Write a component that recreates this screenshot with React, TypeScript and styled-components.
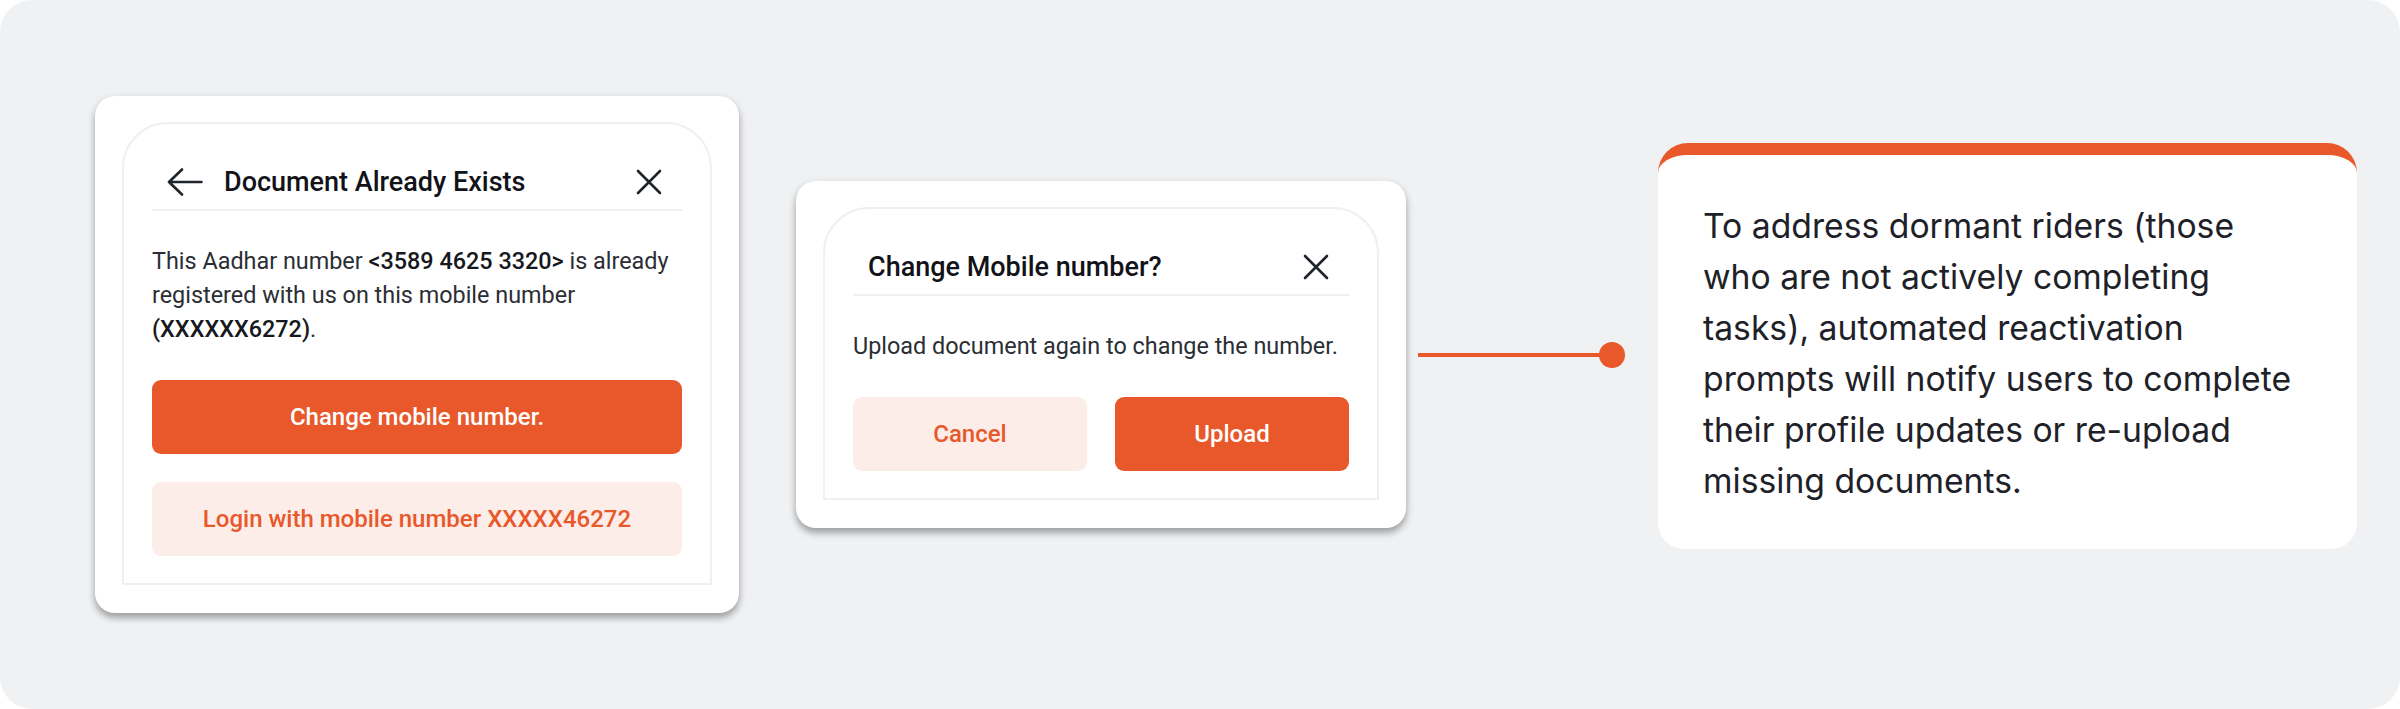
import React from "react";
import styled, { createGlobalStyle } from "styled-components";

const GlobalStyle = createGlobalStyle`
  html, body { margin: 0; padding: 0; background: #ffffff; }
  * { box-sizing: border-box; }
`;

const ORANGE = "#e8582a";
const PINK = "#fdede9";
const INK = "#1d2027";

const Canvas = styled.div`
  width: 2400px;
  height: 709px;
  background: #f0f1f3;
  border-radius: 32px;
  display: flex;
  align-items: center;
  padding-left: 95px;
  font-family: Roboto, "Liberation Sans", sans-serif;
  color: ${INK};
`;

const Card = styled.div<{ $width: number; $gapAfter: number }>`
  width: ${(p) => p.$width}px;
  margin-right: ${(p) => p.$gapAfter}px;
  background: #ffffff;
  border-radius: 20px;
  padding: 26px 27px 28px;
  box-shadow: 0 5px 7px rgba(0, 0, 0, 0.3), 0 2px 10px rgba(0, 0, 0, 0.08);
  flex-shrink: 0;
`;

const Frame = styled.div`
  border: 2px solid #eff0f2;
  border-radius: 46px 46px 0 0;
  padding: 0 28px 27px;
`;

const Header = styled.div`
  display: flex;
  align-items: center;
  height: 87px;
  padding: 40px 15px 9px;
  border-bottom: 2px solid #eef0f2;
`;

const IconButton = styled.span`
  display: inline-flex;
  align-items: center;
  justify-content: center;
  width: 36px;
  height: 36px;
  flex-shrink: 0;
  color: #1f232a;
`;

const Title = styled.h2<{ $indent: number }>`
  margin: 0 0 0 ${(p) => p.$indent}px;
  flex: 1;
  font-size: 27px;
  font-weight: 500;
  line-height: 36px;
  color: #111318;
  white-space: nowrap;
`;

const Body = styled.p`
  margin: 33px 0 0;
  font-size: 23.4px;
  line-height: 34px;
  color: #2b2e34;
`;

const Strong = styled.span`
  font-weight: 500;
  color: #16181d;
`;

const Stack = styled.div<{ $columns: number }>`
  margin-top: 34px;
  display: grid;
  grid-template-columns: repeat(${(p) => p.$columns}, 1fr);
  gap: 28px;
`;

const Button = styled.button<{ $variant: "solid" | "soft" }>`
  height: 74px;
  border: none;
  border-radius: 9px;
  font-family: Roboto, "Liberation Sans", sans-serif;
  font-size: 24px;
  font-weight: 500;
  background: ${(p) => (p.$variant === "solid" ? ORANGE : PINK)};
  color: ${(p) => (p.$variant === "solid" ? "#ffffff" : ORANGE)};
  cursor: pointer;
`;

const Connector = styled.div`
  width: 207px;
  margin: 0 33px 0 12px;
  display: flex;
  align-items: center;
  flex-shrink: 0;
`;

const Line = styled.div`
  flex: 1;
  height: 4px;
  background: ${ORANGE};
  margin-right: -2px;
`;

const Dot = styled.div`
  width: 26px;
  height: 26px;
  border-radius: 50%;
  background: ${ORANGE};
`;

const Note = styled.div`
  width: 699px;
  margin-bottom: 18px;
  background: #ffffff;
  border-top: 12px solid ${ORANGE};
  border-radius: 30px 30px 26px 26px;
  padding: 45px 44px 43px 45px;
  font-family: Inter, "Liberation Sans", sans-serif;
  font-size: 33.7px;
  line-height: 51px;
  color: #1e2128;
  white-space: nowrap;
  flex-shrink: 0;
`;

const ArrowLeft = () => (
  <svg width="36" height="28" viewBox="0 0 36 28" fill="none">
    <path
      d="M34.5 14H2M15 1.5L2 14l13 12.5"
      stroke="currentColor"
      strokeWidth="2.6"
      strokeLinecap="round"
      strokeLinejoin="round"
    />
  </svg>
);

const Close = () => (
  <svg width="26" height="26" viewBox="0 0 26 26" fill="none">
    <path
      d="M2 2l22 22M24 2L2 24"
      stroke="currentColor"
      strokeWidth="2.6"
      strokeLinecap="round"
    />
  </svg>
);

const noteLines = [
  "To address dormant riders (those",
  "who are not actively completing",
  "tasks), automated reactivation",
  "prompts will notify users to complete",
  "their profile updates or re-upload",
  "missing documents.",
];

export default function App() {
  return (
    <>
      <GlobalStyle />
      <Canvas>
        <Card $width={644} $gapAfter={57}>
          <Frame>
            <Header>
              <IconButton>
                <ArrowLeft />
              </IconButton>
              <Title $indent={21}>Document Already Exists</Title>
              <IconButton>
                <Close />
              </IconButton>
            </Header>
            <Body>
              This Aadhar number <Strong>&lt;3589 4625 3320&gt;</Strong> is already registered with us on
              this mobile number <Strong>(XXXXXX6272)</Strong>.
            </Body>
            <Stack $columns={1}>
              <Button $variant="solid">Change mobile number.</Button>
              <Button $variant="soft">Login with mobile number XXXXX46272</Button>
            </Stack>
          </Frame>
        </Card>

        <Card $width={610} $gapAfter={0}>
          <Frame>
            <Header>
              <Title $indent={0}>Change Mobile number?</Title>
              <IconButton>
                <Close />
              </IconButton>
            </Header>
            <Body>Upload document again to change the number.</Body>
            <Stack $columns={2}>
              <Button $variant="soft">Cancel</Button>
              <Button $variant="solid">Upload</Button>
            </Stack>
          </Frame>
        </Card>

        <Connector>
          <Line />
          <Dot />
        </Connector>

        <Note>
          {noteLines.map((line, i) => (
            <React.Fragment key={i}>
              {line}
              {i < noteLines.length - 1 && <br />}
            </React.Fragment>
          ))}
        </Note>
      </Canvas>
    </>
  );
}
